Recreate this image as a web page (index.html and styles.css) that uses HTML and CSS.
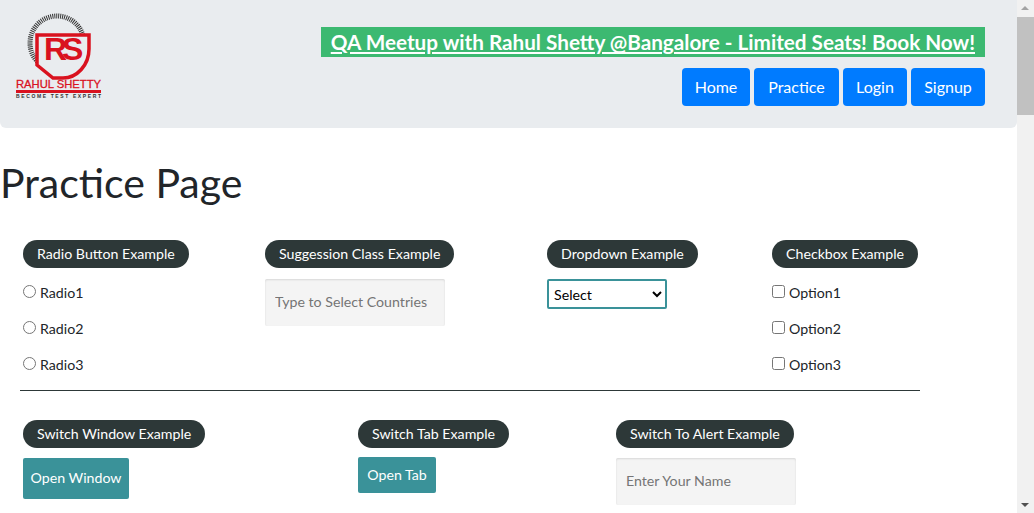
FILE: index.html
```html
<!DOCTYPE html>
<html lang="en">
<head>
  <meta charset="UTF-8" />
  <title>Practice Page</title>
  <link rel="stylesheet" href="styles.css">
</head>
<body>
  <div class="page">
    <header class="top-bar">
      <svg class="logo" viewBox="0 0 88 88" width="88" height="88" aria-label="Rahul Shetty Academy">
        <circle class="logo-ring" cx="42" cy="30" r="27" />
        <path class="logo-shield" d="M22 22 H74 V36 C74 52 62 65 48 65 H38 L22 52 Z" />
        <text class="logo-rs" x="29" y="47">RS</text>
        <text class="logo-name" x="1" y="75" textLength="85" lengthAdjust="spacingAndGlyphs">RAHUL SHETTY</text>
        <rect class="logo-bar" x="1" y="77" width="85" height="3" />
        <text class="logo-tag" x="1" y="85" textLength="85" lengthAdjust="spacing">BECOME TEST EXPERT</text>
      </svg>
      <div class="top-right">
        <a class="banner" href="#">QA Meetup with Rahul Shetty @Bangalore - Limited Seats! Book Now!</a>
        <nav class="nav">
          <button class="nav-btn">Home</button>
          <button class="nav-btn">Practice</button>
          <button class="nav-btn">Login</button>
          <button class="nav-btn">Signup</button>
        </nav>
      </div>
    </header>

    <h1>Practice Page</h1>

    <section class="row row-one">
      <div class="block">
        <span class="legend">Radio Button Example</span>
        <label class="choice"><input type="radio" name="radio"> Radio1</label>
        <label class="choice"><input type="radio" name="radio"> Radio2</label>
        <label class="choice"><input type="radio" name="radio"> Radio3</label>
      </div>
      <div class="block">
        <span class="legend">Suggession Class Example</span>
        <input class="text-field" type="text" placeholder="Type to Select Countries">
      </div>
      <div class="block">
        <span class="legend">Dropdown Example</span>
        <select class="dropdown"><option>Select</option></select>
      </div>
      <div class="block">
        <span class="legend">Checkbox Example</span>
        <label class="choice"><input type="checkbox"> Option1</label>
        <label class="choice"><input type="checkbox"> Option2</label>
        <label class="choice"><input type="checkbox"> Option3</label>
      </div>
    </section>

    <hr class="divider">

    <section class="row row-two">
      <div class="block">
        <span class="legend">Switch Window Example</span>
        <button class="action action-window">Open Window</button>
      </div>
      <div class="block">
        <span class="legend">Switch Tab Example</span>
        <button class="action action-tab">Open Tab</button>
      </div>
      <div class="block">
        <span class="legend">Switch To Alert Example</span>
        <input class="text-field text-field-alert" type="text" placeholder="Enter Your Name">
      </div>
    </section>
  </div>

  <div class="scrollbar">
    <span class="arrow arrow-up"></span>
    <span class="thumb"></span>
    <span class="arrow arrow-down"></span>
  </div>
</body>
</html>
```

FILE: styles.css
```css
html, body {
  height: 100%;
}

body {
  margin: 0;
  overflow: hidden;
  background: #fff;
  color: #212529;
  font-family: Lato, "Open Sans", sans-serif;
  font-size: 14.2px;
}

.page {
  width: 1017px;
  height: 513px;
  overflow: hidden;
}

/* header */
.top-bar {
  display: flex;
  justify-content: space-between;
  height: 128px;
  box-sizing: border-box;
  padding: 13px 32px 0 15px;
  background: #e9ecef;
  border-radius: 0 0 6px 6px;
}

.logo-ring {
  fill: none;
  stroke: #333;
  stroke-width: 5;
  stroke-dasharray: 1 1;
}

.logo-shield {
  fill: #e9ecef;
  stroke: #d9121f;
  stroke-width: 3.5;
}

.logo-rs {
  font-family: "Liberation Sans", sans-serif;
  font-size: 32px;
  font-weight: 700;
  letter-spacing: -5px;
  fill: #d9121f;
}

.logo-name {
  font-family: "Liberation Sans", sans-serif;
  font-size: 11px;
  stroke: #d9121f;
  stroke-width: 0.3;
  fill: #d9121f;
}

.logo-bar {
  fill: #d9121f;
}

.logo-tag {
  font-family: "Liberation Sans", sans-serif;
  font-size: 5px;
  font-weight: 700;
  fill: #333;
}

.top-right {
  display: flex;
  flex-direction: column;
  align-items: flex-end;
  padding-top: 14px;
}

.banner {
  height: 30px;
  padding: 0 10px;
  background: #3cb971;
  color: #fff;
  font-size: 20.7px;
  font-weight: 700;
  line-height: 30px;
  white-space: nowrap;
}

.nav {
  display: grid;
  grid-template-columns: 68px 85px 64px 74px;
  gap: 4px;
  margin-top: 11px;
}

.nav-btn {
  height: 38px;
  padding: 0 0 2px;
  border: 0;
  border-radius: 4px;
  background: #007bff;
  color: #fff;
  font-family: inherit;
  font-size: 16px;
}

h1 {
  margin: 31px 0 0;
  font-size: 41px;
  font-weight: 400;
  line-height: 48px;
}

/* example blocks */
.row {
  display: grid;
  width: 900px;
  box-sizing: border-box;
  padding-left: 23px;
}

.row-one {
  grid-template-columns: 242px 282px 225px 1fr;
  margin-top: 33px;
}

.row-two {
  grid-template-columns: 335px 258px 1fr;
  margin-top: 29px;
}

.block {
  display: flex;
  flex-direction: column;
  align-items: flex-start;
}

.legend {
  height: 28px;
  padding: 0 14px;
  border-radius: 14px;
  background: #2d3838;
  color: #fff;
  line-height: 27px;
  white-space: nowrap;
}

.choice {
  display: flex;
  align-items: center;
  gap: 4px;
  height: 36px;
}

.row-one .legend + .choice {
  margin-top: 6px;
}

.choice input {
  width: 13px;
  height: 13px;
  margin: -1px 0 0;
}

.text-field {
  width: 180px;
  height: 47px;
  margin-top: 11px;
  padding: 0 10px 2px;
  box-sizing: border-box;
  border: 0;
  border-radius: 2px;
  background: #f4f4f4;
  box-shadow: inset 0 1px 2px rgba(0, 0, 0, 0.12);
  color: #212529;
  font-family: inherit;
  font-size: 14.2px;
}

.text-field-alert {
  margin-top: 10px;
}

.dropdown {
  width: 120px;
  height: 30px;
  margin-top: 11px;
  padding-left: 1px;
  box-sizing: border-box;
  border: 2px solid #3a9299;
  border-radius: 2px;
  background: #fff;
  color: #000;
  font-family: inherit;
  font-size: 14.2px;
}

.action {
  padding: 0 0 2px;
  border: 0;
  border-radius: 2px;
  background: #3a9299;
  color: #fff;
  font-family: inherit;
  font-size: 14.2px;
  white-space: nowrap;
}

.action-window {
  width: 106px;
  height: 41px;
  margin-top: 10px;
}

.action-tab {
  width: 78px;
  height: 36px;
  margin-top: 9px;
}

.divider {
  width: 900px;
  height: 1px;
  margin: 8px 0 0 20px;
  border: 0;
  background: #2d3838;
}

/* scrollbar */
.scrollbar {
  position: fixed;
  top: 0;
  right: 0;
  bottom: 0;
  width: 17px;
  background: #f1f1f1;
}

.thumb {
  position: absolute;
  top: 17px;
  left: 0;
  width: 100%;
  height: 98px;
  background: #c1c1c1;
}

.arrow {
  position: absolute;
  left: 4px;
  border-left: 4px solid transparent;
  border-right: 4px solid transparent;
}

.arrow-up {
  top: 6px;
  border-bottom: 4px solid #a3a3a3;
}

.arrow-down {
  bottom: 6px;
  border-top: 4px solid #505050;
}
```
